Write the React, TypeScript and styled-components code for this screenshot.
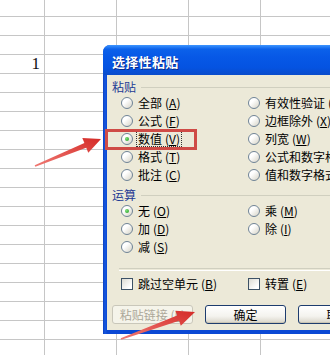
import React from 'react';
import styled, { createGlobalStyle } from 'styled-components';

const GlobalStyle = createGlobalStyle`
  html, body {
    margin: 0;
    padding: 0;
    background: #fff;
  }
  body {
    font-family: "Noto Sans CJK SC", "Noto Sans", sans-serif;
  }
`;

const Page = styled.div`
  position: relative;
  width: 330px;
  height: 355px;
  overflow: hidden;
  background: #fff;
`;

const Sheet = styled.div`
  display: grid;
  grid-template-columns: 45px repeat(5, 72px);
  grid-template-rows: 17px;
  grid-auto-rows: 19px;
`;

const Cell = styled.div`
  box-sizing: border-box;
  border-right: 1px solid #c6c6c6;
  border-bottom: 1px solid #c6c6c6;
  display: flex;
  align-items: center;
  justify-content: flex-end;
  padding-right: 4px;
  font-family: "Liberation Serif", serif;
  font-size: 17px;
  color: #111;
`;

const Window = styled.div`
  position: absolute;
  left: 103px;
  top: 45px;
  width: 300px;
  box-sizing: border-box;
  padding: 0 4px 4px;
  border-radius: 7px 7px 0 0;
  background: linear-gradient(90deg, #0a3fc0 0, #1658e0 2px, #0a48d4 4px);
  display: flex;
  flex-direction: column;
`;

const TitleBar = styled.div`
  height: 30px;
  margin: 0 -4px;
  padding: 2px 0 0 9px;
  box-sizing: border-box;
  border-radius: 7px 7px 0 0;
  background: linear-gradient(
    180deg,
    #3d95ff 0%,
    #0b61ea 14%,
    #0758e6 40%,
    #0553e1 75%,
    #0a4ccb 100%
  );
  display: flex;
  align-items: center;
  color: #fff;
  font-size: 13px;
  font-weight: bold;
  letter-spacing: 0.3px;
  text-shadow: 1px 1px #0b2a8a;
`;

const Body = styled.div`
  background: #ece9d8;
  padding: 4px 5px 6px;
  display: flex;
  flex-direction: column;
`;

const Section = styled.div<{ $gap?: number }>`
  margin-top: ${(p) => p.$gap ?? 0}px;
  display: flex;
  flex-direction: column;
`;

const GroupLabel = styled.div`
  height: 15px;
  display: flex;
  align-items: center;
  gap: 5px;
  font-size: 12px;
  color: #1d3a94;

  &::after {
    content: '';
    flex: 1;
    height: 1px;
    margin-top: 2px;
    background: #d0cfbf;
  }
`;

const OptionGrid = styled.div<{ $row?: number }>`
  display: grid;
  grid-template-columns: 127px 127px;
  grid-auto-rows: ${(p) => p.$row ?? 18}px;
  padding-left: 9px;
`;

const Option = styled.div`
  display: flex;
  align-items: center;
  gap: 4px;
  white-space: nowrap;
  font-size: 12px;
  color: #000;
`;

const Label = styled.span<{ $focus?: boolean }>`
  padding: 0 1px;
  line-height: 14px;
  outline: ${(p) => (p.$focus ? '1px dotted #333' : 'none')};
`;

const Key = styled.span`
  margin-left: 3px;
`;

const Radio = styled.span<{ $on?: boolean }>`
  flex: none;
  width: 12px;
  height: 12px;
  box-sizing: border-box;
  border-radius: 50%;
  border: 1px solid #6f8396;
  background: linear-gradient(135deg, #ffffff 35%, #d6d3c6 100%);
  display: flex;
  align-items: center;
  justify-content: center;

  &::after {
    content: '';
    display: ${(p) => (p.$on ? 'block' : 'none')};
    width: 4px;
    height: 4px;
    border-radius: 50%;
    background: radial-gradient(circle at 35% 35%, #7ee07a, #1f9a1f);
  }
`;

const Check = styled.span`
  flex: none;
  width: 12px;
  height: 12px;
  box-sizing: border-box;
  border: 1px solid #3d5266;
  background: linear-gradient(135deg, #dcdbd3 0%, #ffffff 80%);
`;

const Divider = styled.div`
  margin: 12px 0 0 7px;
  height: 1px;
  border-top: 1px solid #d0cfbf;
  border-bottom: 1px solid #fff;
`;

const Buttons = styled.div`
  margin-top: 13px;
  display: flex;
  gap: 12px;
`;

const Button = styled.div<{ $disabled?: boolean }>`
  flex: none;
  width: 81px;
  height: 19px;
  box-sizing: border-box;
  border-radius: 3px;
  border: 1px solid ${(p) => (p.$disabled ? '#c9c7ba' : '#1d3c6e')};
  background: ${(p) =>
    p.$disabled
      ? '#f5f4ea'
      : 'linear-gradient(180deg, #ffffff 0%, #f4f3ee 60%, #d8d4c8 100%)'};
  box-shadow: ${(p) => (p.$disabled ? 'none' : 'inset 0 -1px #c9c4b4')};
  display: flex;
  align-items: center;
  justify-content: center;
  font-size: 12px;
  color: ${(p) => (p.$disabled ? '#aca899' : '#000')};
  white-space: nowrap;
`;

const Highlight = styled.div`
  position: absolute;
  left: 105px;
  top: 129px;
  width: 92px;
  height: 21px;
  box-sizing: border-box;
  border: 3px solid #cf4b46;
`;

const Marks = styled.svg`
  position: absolute;
  left: 0;
  top: 0;
  pointer-events: none;
`;

type Item = { text: string; key: string; on?: boolean; focus?: boolean };

const pasteOptions: Item[] = [
  { text: '全部', key: 'A' },
  { text: '有效性验证', key: 'N' },
  { text: '公式', key: 'F' },
  { text: '边框除外', key: 'X' },
  { text: '数值', key: 'V', on: true, focus: true },
  { text: '列宽', key: 'W' },
  { text: '格式', key: 'T' },
  { text: '公式和数字格式', key: 'R' },
  { text: '批注', key: 'C' },
  { text: '值和数字格式', key: 'U' },
];

const opOptions: Item[] = [
  { text: '无', key: 'O', on: true },
  { text: '乘', key: 'M' },
  { text: '加', key: 'D' },
  { text: '除', key: 'I' },
  { text: '减', key: 'S' },
];

const checks: Item[] = [
  { text: '跳过空单元', key: 'B' },
  { text: '转置', key: 'E' },
];

const Caption: React.FC<{ item: Item }> = ({ item }) => (
  <Label $focus={item.focus}>
    {item.text}
    <Key>
      (<u>{item.key}</u>)
    </Key>
  </Label>
);

const RadioGroup: React.FC<{ items: Item[] }> = ({ items }) => (
  <OptionGrid>
    {items.map((item) => (
      <Option key={item.key}>
        <Radio $on={item.on} />
        <Caption item={item} />
      </Option>
    ))}
  </OptionGrid>
);

const cells = Array.from({ length: 6 * 19 }, (_, i) => (i === 18 ? '1' : ''));

const App: React.FC = () => (
  <Page>
    <GlobalStyle />
    <Sheet>
      {cells.map((v, i) => (
        <Cell key={i}>{v}</Cell>
      ))}
    </Sheet>

    <Window>
      <TitleBar>选择性粘贴</TitleBar>
      <Body>
        <Section>
          <GroupLabel>粘贴</GroupLabel>
          <RadioGroup items={pasteOptions} />
        </Section>
        <Section $gap={3}>
          <GroupLabel>运算</GroupLabel>
          <RadioGroup items={opOptions} />
        </Section>
        <Divider />
        <Section $gap={5}>
          <OptionGrid $row={16}>
            {checks.map((item) => (
              <Option key={item.key}>
                <Check />
                <Caption item={item} />
              </Option>
            ))}
          </OptionGrid>
        </Section>
        <Buttons>
          <Button $disabled>
            粘贴链接 (<u>L</u>)
          </Button>
          <Button>确定</Button>
          <Button>取消</Button>
        </Buttons>
      </Body>
    </Window>

    <Highlight />

    <Marks width={330} height={355} viewBox="0 0 330 355">
      <defs>
        <linearGradient id="arrowRed" x1="0" y1="1" x2="1" y2="0">
          <stop offset="0" stopColor="#f07a74" />
          <stop offset="1" stopColor="#d42b27" />
        </linearGradient>
      </defs>
      <polygon
        fill="url(#arrowRed)"
        points="34.7,165.3 84.4,143.1 82.3,138 101,139 88.3,152.8 86.2,147.7 35.3,166.7"
      />
      <polygon
        fill="url(#arrowRed)"
        points="120.7,338.2 177.1,315.6 175.4,310.7 195,312 180.8,325.7 179.1,320.8 121.3,339.8"
      />
    </Marks>
  </Page>
);

export default App;
